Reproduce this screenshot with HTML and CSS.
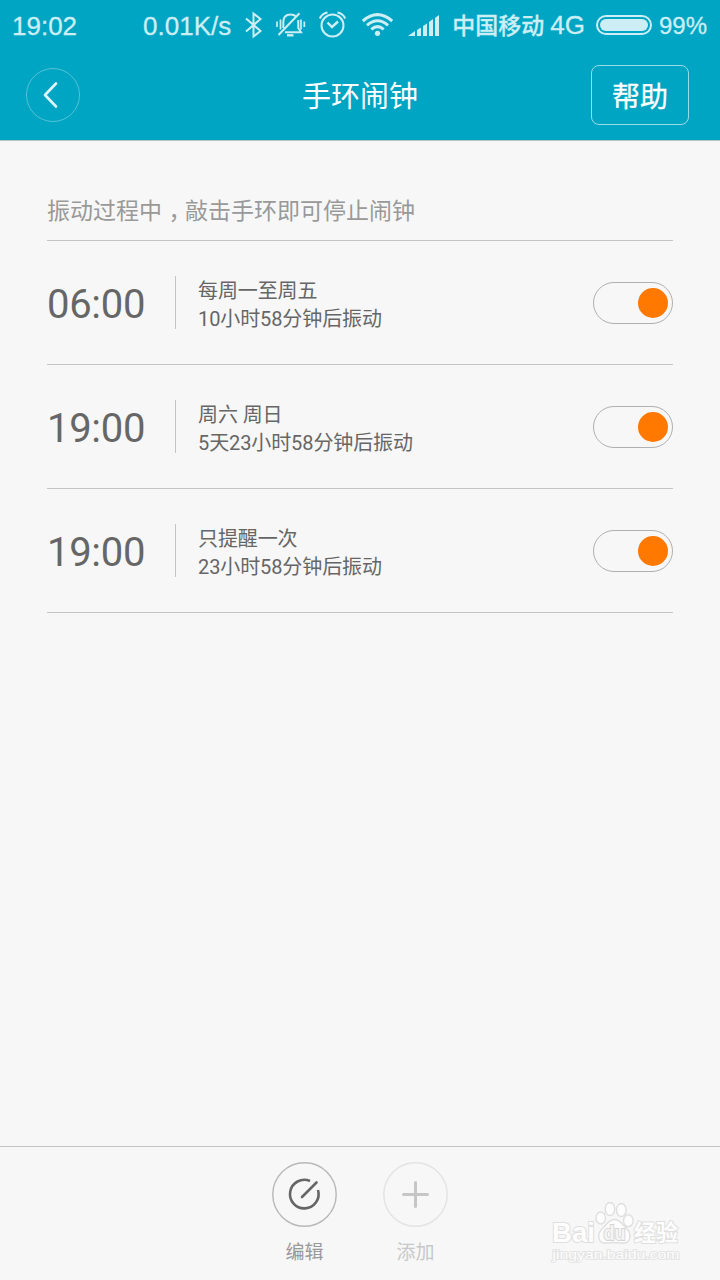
FILE: index.html
```
<!DOCTYPE html>
<html lang="zh-CN">
<head>
    <meta charset="UTF-8">
    <meta name="viewport" content="width=device-width, initial-scale=1.0">
    <title>手环闹钟</title>
    <link rel="stylesheet" href="styles.css">
</head>
<body>
<div class="screen">
    <header class="header">
        <div class="status">
            <span class="clock">19:02</span>
            <span class="speed">0.01K/s</span>
            <!-- bluetooth, mute, alarm, wifi, signal -->
            <svg class="status-icons" width="205" height="50" viewBox="235 0 205 50" fill="none" stroke="#cceef4" stroke-width="2">
                <path d="M246 18.500 L260.500 31 L253.500 36.500 V13.500 L260.500 19 L246 31.500"/>
                <path d="M283.300 28 V22 Q283.300 14.500 290.500 14.500 Q294 14.500 296 16.500 M298.300 20 V28 L301 32.300 H285 M278.500 35 L299.500 13.300"/>
                <path d="M287 35.300 H293.500" stroke-width="2.400"/>
                <path d="M277 21.500 V27 M280.500 19.500 V29.500 M301 19.500 V29.500 M304.300 21.500 V27" stroke-width="1.700"/>
                <circle cx="332.500" cy="25.500" r="11"/>
                <path d="M327.500 22.500 L332 27 L338 21.500" stroke-width="2.400"/>
                <path d="M319.800 18.500 Q322 13.500 327.500 12.500 M337.500 12.500 Q343 13.500 345.200 18.500" stroke-width="2.200"/>
                <g stroke-width="3">
                    <path d="M362.800 21 Q377.500 8.200 392.200 21"/>
                    <path d="M367 25.300 Q377.500 16.200 388 25.300"/>
                    <path d="M371.300 29.300 Q377.500 24 383.700 29.300"/>
                </g>
                <g fill="#cceef4" stroke="none">
                    <circle cx="377.500" cy="33.300" r="2.600"/>
                    <path d="M408 36 L415 31 V36 Z M417 30 L421 27.500 V36 H417 Z M423 26 L427 23.500 V36 H423 Z M429 22 L433 19 V36 H429 Z M435 18 L439 15 V36 H435 Z"/>
                </g>
            </svg>
            <span class="carrier">中国移动</span>
            <span class="network">4G</span>
            <span class="battery"><span class="battery-level"></span></span>
            <span class="percent">99%</span>
        </div>
        <div class="nav">
            <a class="back" href="#">
                <svg width="52" height="52" viewBox="0 0 52 52" fill="none" stroke="#e0f5f8" stroke-width="2.600" stroke-linecap="round" stroke-linejoin="round">
                    <path d="M29 14.500 L18 26 L29 37.500"/>
                </svg>
            </a>
            <h1 class="title">手环闹钟</h1>
            <a class="help" href="#">帮助</a>
        </div>
    </header>

    <main class="content">
        <p class="tip">振动过程中<span class="comma">，</span>敲击手环即可停止闹钟</p>
        <ul class="alarms">
            <li class="alarm">
                <div class="time">06:00</div>
                <div class="info">
                    <div>每周一至周五</div>
                    <div>10小时58分钟后振动</div>
                </div>
                <div class="switch"><span class="knob"></span></div>
            </li>
            <li class="alarm">
                <div class="time">19:00</div>
                <div class="info">
                    <div>周六 周日</div>
                    <div>5天23小时58分钟后振动</div>
                </div>
                <div class="switch"><span class="knob"></span></div>
            </li>
            <li class="alarm">
                <div class="time">19:00</div>
                <div class="info">
                    <div>只提醒一次</div>
                    <div>23小时58分钟后振动</div>
                </div>
                <div class="switch"><span class="knob"></span></div>
            </li>
        </ul>
    </main>

    <footer class="footer">
        <div class="action">
            <svg width="65" height="65" viewBox="0 0 65 65" fill="none" stroke-linecap="round">
                <circle cx="32.500" cy="32.500" r="31.700" stroke="#b8b8b8" stroke-width="1.400"/>
                <path d="M38 19 A14.300 14.300 0 1 0 46 28" stroke="#666" stroke-width="2.600" stroke-linecap="butt"/>
                <path d="M30 35 L44.500 20.500" stroke="#666" stroke-width="2.600"/>
            </svg>
            <span>编辑</span>
        </div>
        <div class="action disabled">
            <svg width="65" height="65" viewBox="0 0 65 65" fill="none" stroke-linecap="round">
                <circle cx="32.500" cy="32.500" r="31.700" stroke="#e3e3e3" stroke-width="1.400"/>
                <path d="M20.500 32.500 H44.500 M32.500 20.500 V44.500" stroke="#c6c6c6" stroke-width="3"/>
            </svg>
            <span>添加</span>
        </div>
    </footer>

    <div class="watermark">
        <svg width="140" height="74" viewBox="0 0 140 74" fill="#fdfdfd" stroke="#dfdfdf" stroke-width="1.400">
            <text class="wm-logo" x="6" y="51.500" textLength="43" lengthAdjust="spacingAndGlyphs">Bai</text>
            <text class="wm-name" x="88" y="51" textLength="44" lengthAdjust="spacingAndGlyphs">经验</text>
            <ellipse cx="54.700" cy="28" rx="4.800" ry="6"/>
            <ellipse cx="64" cy="19" rx="4.800" ry="6.500"/>
            <ellipse cx="75.300" cy="20" rx="4.800" ry="6.500"/>
            <ellipse cx="82.300" cy="30.700" rx="4.800" ry="6"/>
            <path d="M68.500 29.500 C74 29.500 76 34 80 38 C86 43 85 53.500 77 53 C73 53 71 52.500 68 52.500 C65 52.500 64 53 60 53 C51 53.500 51 43 57 38 C61 34 63 29.500 68.500 29.500 Z"/>
            <text class="wm-du" x="57.500" y="50" textLength="22" lengthAdjust="spacingAndGlyphs">du</text>
            <text class="wm-url" x="6.500" y="69" textLength="127" lengthAdjust="spacingAndGlyphs">jingyan.baidu.com</text>
        </svg>
    </div>
</div>
</body>
</html>
```

FILE: styles.css
```
* {
    box-sizing: border-box;
}

body {
    margin: 0;
    font-family: Roboto, "Noto Sans CJK SC", sans-serif;
    background-color: #f7f7f7;
    color: #666;
}

a {
    color: inherit;
    text-decoration: none;
}

.screen {
    position: relative;
    display: flex;
    flex-direction: column;
    width: 720px;
    height: 1280px;
    overflow: hidden;
}

/* Header */
.header {
    height: 141px;
    background-color: #00a5c3;
    border-bottom: 1px solid #b9c4c6;
    color: #fff;
}

.status {
    display: flex;
    align-items: center;
    height: 50px;
    padding: 0 13px 0 12px;
    font-family: "Liberation Sans", "Noto Sans CJK SC", sans-serif;
    font-size: 26px;
    line-height: 50px;
    white-space: nowrap;
    color: #cceef4;
    -webkit-text-stroke: 0.3px #cceef4;
}

.clock,
.speed {
    padding-top: 2px;
}

.speed {
    margin-left: auto;
}

.status-icons {
    flex: none;
    margin-left: 4px;
}

.carrier {
    margin-left: 12px;
    padding-top: 2px;
    font-size: 23px;
    font-weight: 500;
}

.network {
    margin-left: 6px;
}

.battery {
    width: 56px;
    height: 20px;
    margin-left: 11px;
    padding: 2px;
    border: 2px solid #cceef4;
    border-radius: 10px;
}

.battery-level {
    display: block;
    height: 12px;
    border-radius: 6px;
    background-color: #cceef4;
}

.percent {
    margin-left: 7px;
    padding-top: 2px;
    font-size: 24px;
}

.nav {
    display: grid;
    grid-template-columns: 98px 1fr 98px;
    align-items: center;
    height: 90px;
    padding: 0 31px 0 26px;
}

.back {
    width: 54px;
    height: 54px;
    border: 1px solid #55c3d7;
    border-radius: 50%;
}

.back svg {
    display: block;
}

.title {
    margin: 0;
    padding: 3px 0 0 5px;
    font-size: 29px;
    line-height: 40px;
    font-weight: normal;
    text-align: center;
}

.help {
    height: 60px;
    padding-top: 3px;
    border: 1px solid #99dbe7;
    border-radius: 8px;
    font-size: 28px;
    line-height: 58px;
    text-align: center;
    -webkit-text-stroke: 0.3px #fff;
}

/* Alarm list */
.content {
    flex: 1;
    padding: 50px 47px 0;
}

.tip {
    height: 50px;
    margin: 0;
    border-bottom: 1px solid #c4c4c4;
    font-family: "Noto Sans CJK SC", sans-serif;
    font-size: 23px;
    line-height: 36px;
    color: #999;
}

/* half-width comma in the middle of a full cell */
.comma {
    padding: 0 5px 0 6.5px;
    font-feature-settings: "halt";
}

.alarms {
    margin: 0;
    padding: 0;
    list-style: none;
}

.alarm {
    display: flex;
    align-items: center;
    height: 124px;
    border-bottom: 1px solid #c4c4c4;
}

.time {
    width: 128px;
    padding-top: 4px;
    font-size: 40px;
    line-height: 54px;
    letter-spacing: -0.3px;
}

.info {
    height: 53px;
    padding: 1px 0 0 22px;
    border-left: 1px solid #c4c4c4;
    font-size: 20px;
    line-height: 28px;
    letter-spacing: -0.1px;
}

.switch {
    display: flex;
    align-items: center;
    justify-content: flex-end;
    width: 80px;
    height: 42px;
    margin-left: auto;
    padding-right: 4px;
    border: 1px solid #b0b0b0;
    border-radius: 21px;
}

.knob {
    width: 30px;
    height: 30px;
    border-radius: 50%;
    background-color: #ff7800;
}

/* Bottom buttons */
.footer {
    display: flex;
    justify-content: center;
    gap: 46px;
    height: 134px;
    padding-top: 15px;
    border-top: 1px solid #c4c4c4;
}

.action {
    width: 65px;
    font-size: 19px;
    line-height: 28px;
    text-align: center;
    color: #999;
}

.action svg {
    display: block;
    margin-bottom: 12px;
}

.disabled {
    color: #c8c8c8;
}

/* Watermark over the footer */
.watermark {
    position: absolute;
    right: 34px;
    bottom: 16px;
    height: 74px;
}

.watermark text {
    font-family: "Liberation Sans", "Noto Sans CJK SC", sans-serif;
    font-weight: bold;
    paint-order: stroke;
    stroke-width: 2px;
}

.watermark .wm-logo {
    font-size: 27px;
}

.watermark .wm-name {
    font-size: 23px;
}

.watermark .wm-du {
    font-size: 20px;
    fill: #f4f4f4;
    stroke: #d4d4d4;
}

.watermark .wm-url {
    font-size: 13px;
    font-weight: normal;
    stroke: #e4e4e4;
}
```
